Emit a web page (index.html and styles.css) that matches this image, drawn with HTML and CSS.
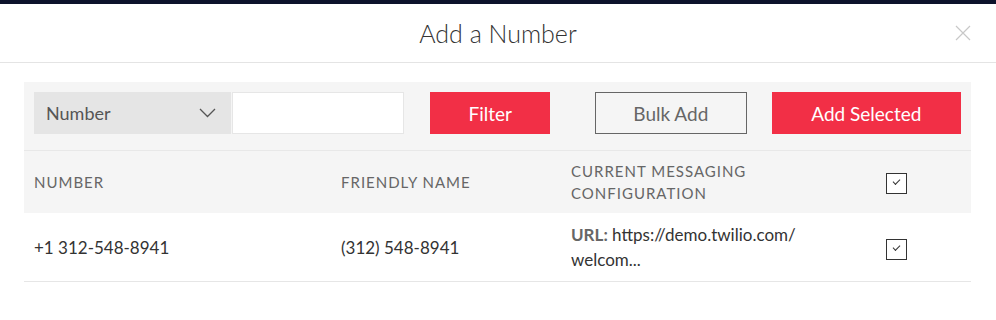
FILE: index.html
```html
<!DOCTYPE html>
<html lang="en">
<head>
    <meta charset="UTF-8">
    <meta name="viewport" content="width=device-width, initial-scale=1.0">
    <title>Add a Number</title>
    <link rel="stylesheet" href="styles.css">
</head>
<body>
    <div class="topbar"></div>
    <div class="modal">
        <div class="modal-header">
            <h1>Add a Number</h1>
            <button class="close" type="button" aria-label="Close">
                <svg width="16" height="16" viewBox="0 0 16 16">
                    <path d="M1 1 L15 15 M15 1 L1 15" stroke="#c8c8c8" stroke-width="1.2" fill="none"/>
                </svg>
            </button>
        </div>

        <div class="modal-body">
            <div class="toolbar">
                <div class="select">
                    <span>Number</span>
                    <svg width="17" height="10" viewBox="0 0 17 10">
                        <path d="M1 1 L8.5 8.5 L16 1" stroke="#555" stroke-width="1.3" fill="none"/>
                    </svg>
                </div>
                <input class="search" type="text">
                <button class="btn btn-red btn-filter" type="button">Filter</button>
                <button class="btn btn-outline" type="button">Bulk Add</button>
                <button class="btn btn-red btn-add" type="button">Add Selected</button>
            </div>

            <table class="numbers">
                <thead>
                    <tr>
                        <th class="col-number">Number</th>
                        <th class="col-name">Friendly Name</th>
                        <th class="col-config">Current Messaging Configuration</th>
                        <th class="col-check"><span class="check"></span></th>
                    </tr>
                </thead>
                <tbody>
                    <tr>
                        <td>+1 312-548-8941</td>
                        <td>(312) 548-8941</td>
                        <td class="col-config"><span class="label">URL:</span> https://demo.twilio.com/ welcom...</td>
                        <td class="col-check"><span class="check"></span></td>
                    </tr>
                </tbody>
            </table>
        </div>
    </div>
</body>
</html>
```

FILE: styles.css
```css
body {
    font-family: Lato, 'Open Sans', sans-serif;
    margin: 0;
    padding: 0;
    background-color: #fff;
    color: #333;
}
.topbar {
    height: 4px;
    background-color: #0d122b;
}
.modal-header {
    position: relative;
    height: 58px;
    border-bottom: 1px solid #e4e4e4;
    display: flex;
    justify-content: center;
    align-items: center;
}
.modal-header h1 {
    margin: 0;
    font-size: 25px;
    font-weight: 300;
    color: #333;
}
.close {
    position: absolute;
    right: 25px;
    top: 21px;
    border: none;
    background: none;
    padding: 0;
    cursor: pointer;
}
.modal-body {
    padding: 19px 25px 0 24px;
}
.toolbar {
    display: flex;
    align-items: center;
    padding: 10px 10px 16px;
    background-color: #f5f5f5;
    border-bottom: 1px solid #e8e8e8;
    height: 42px;
}
.select {
    width: 198px;
    height: 42px;
    box-sizing: border-box;
    padding: 0 15px 0 12px;
    background-color: #e5e5e5;
    display: flex;
    align-items: center;
    justify-content: space-between;
    font-size: 18px;
    color: #555;
}
.search {
    width: 172px;
    height: 42px;
    box-sizing: border-box;
    margin-left: 1px;
    border: 1px solid #e6e6e6;
    background-color: #fff;
    outline: none;
}
.btn {
    height: 42px;
    box-sizing: border-box;
    font-family: inherit;
    font-size: 19px;
    cursor: pointer;
}
.btn-red {
    background-color: #f22f46;
    color: #fff;
    border: none;
}
.btn-filter {
    width: 120px;
    margin-left: 26px;
}
.btn-outline {
    width: 152px;
    margin-left: 45px;
    background-color: transparent;
    border: 1px solid #666;
    color: #666;
}
.btn-add {
    width: 190px;
    margin-left: 25px;
}
.numbers {
    width: 100%;
    border-collapse: collapse;
}
.numbers th {
    height: 62px;
    background-color: #f5f5f5;
    text-align: left;
    font-weight: 400;
    font-size: 15px;
    letter-spacing: 1px;
    text-transform: uppercase;
    color: #666;
    padding: 0 10px;
    line-height: 22px;
}
.numbers td {
    height: 68px;
    padding: 0 10px;
    font-size: 17px;
    line-height: 25px;
    color: #333;
    border-bottom: 1px solid #e6e6e6;
}
.numbers td .label {
    font-weight: 700;
    color: #666;
}
.col-number {
    width: 287px;
}
.col-name {
    width: 210px;
}
.numbers .col-config {
    width: 265px;
    padding-right: 40px;
}
.col-check {
    text-align: left;
}
.check {
    display: inline-block;
    width: 19px;
    height: 19px;
    border: 1px solid #333;
    background-color: #fff;
    vertical-align: middle;
    position: relative;
}
.check::after {
    content: '';
    position: absolute;
    left: 6px;
    top: 5px;
    width: 6px;
    height: 3px;
    border-left: 1.5px solid #333;
    border-bottom: 1.5px solid #333;
    transform: rotate(-45deg);
}
```
